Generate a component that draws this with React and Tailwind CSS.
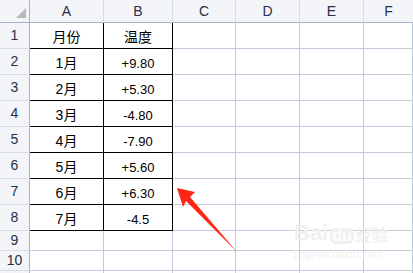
const cols = ['A', 'B', 'C', 'D', 'E', 'F']

const data = [
  ['月份', '温度'],
  ['1月', '+9.80'],
  ['2月', '+5.30'],
  ['3月', '-4.80'],
  ['4月', '-7.90'],
  ['5月', '+5.60'],
  ['6月', '+6.30'],
  ['7月', '-4.5'],
]

const rowHeights = ['h-[26px]', 'h-[26px]', 'h-[26px]', 'h-[26px]', 'h-[26px]', 'h-[26px]', 'h-[26px]', 'h-[26px]', 'h-[20px]', 'h-[20px]', 'h-[20px]']

const numFont = { fontFamily: '"Liberation Sans", Arial, sans-serif' }

const Cell = ({ value, boxed }) => (
  <div
    className={`h-full flex items-end justify-center pb-[4px] border-r border-b leading-none text-black ${
      /[月温度份]/.test(value) ? 'text-[14px]' : 'text-[13px]'
    } ${boxed ? 'border-black' : 'border-[#c3cadb]'}`}
    style={{ fontFamily: '"Liberation Sans", "Noto Sans CJK SC", sans-serif' }}
  >
    {value}
  </div>
)

const App = () => {
  return (
    <div className="relative w-[413px] h-[273px] overflow-hidden bg-white">
      <div className="grid grid-cols-[30px_74px_69px_63px_64px_64px_1fr]">
        {/* header row */}
        <div className="h-[23px] bg-[#f3f5f8] border-r border-b border-[#a9b3c6] relative">
          <svg className="absolute left-[15px] top-[8px]" width="12" height="11" viewBox="0 0 12 11">
            <polygon points="11,0 11,10 1,10" fill="#b9b9b9" />
          </svg>
        </div>
        {cols.map((c, i) => (
          <div
            key={c}
            className={`h-[23px] bg-[#f3f5f8] border-b border-[#a9b3c6] flex items-center justify-center text-[14px] text-[#26304a] ${
              i < cols.length - 1 ? 'border-r border-r-[#d7dce6]' : ''
            }`}
            style={numFont}
          >
            {c}
          </div>
        ))}

        {/* body rows */}
        {rowHeights.map((h, r) => {
          const row = data[r] || []
          return [
            <div
              key={`h${r}`}
              className={`${h} bg-[#f3f5f8] border-r border-b border-r-[#a9b3c6] border-b-[#d7dce6] flex items-center justify-center text-[14px] text-[#26304a]`}
              style={numFont}
            >
              {r < 10 ? r + 1 : ''}
            </div>,
            ...cols.map((c, ci) => (
              <div key={`${r}${c}`} className={h}>
                <Cell value={row[ci] || ''} boxed={r < 8 && ci < 2} />
              </div>
            )),
          ]
        })}
      </div>

      {/* baidu watermark */}
      <div className="absolute left-[294px] top-[222px] flex flex-col items-start pointer-events-none select-none">
        <div className="flex items-end gap-[2px] text-[#f0f0f0] font-bold leading-none" style={{ fontFamily: '"Liberation Sans", "Noto Sans CJK SC", sans-serif' }}>
          <span className="text-[22px]">Bai</span>
          <span className="text-[16px] bg-[#f0f0f0] text-white rounded-[6px] px-[2px]">du</span>
          <span className="text-[16px]">经验</span>
        </div>
        <div className="text-[11px] text-[#f0f0f0] mt-[2px]" style={numFont}>jingyan.baidu.com</div>
      </div>

      {/* red arrow */}
      <svg className="absolute left-0 top-0 pointer-events-none" width="413" height="273" viewBox="0 0 413 273">
        <polygon points="177,188 195,192 190,197 237,252 186,201 183,207" fill="#ff2413" />
      </svg>
    </div>
  )
}

export default App
